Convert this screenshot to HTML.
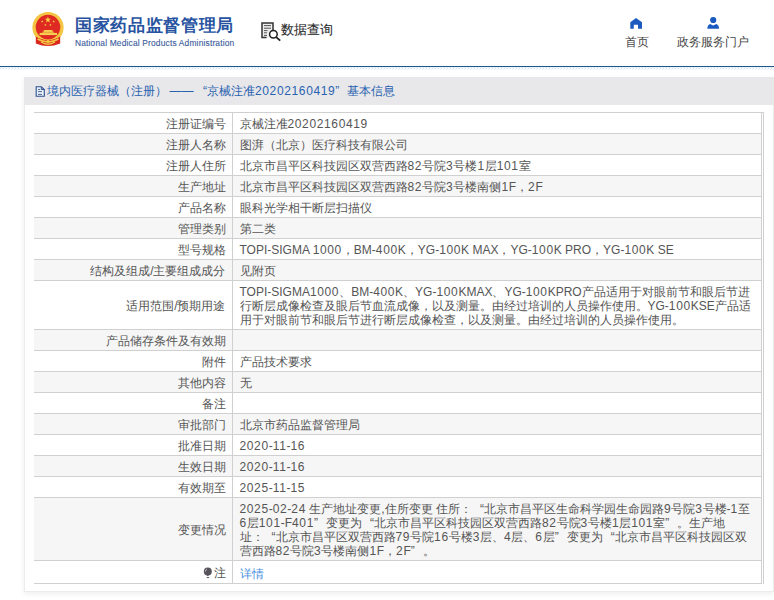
<!DOCTYPE html>
<html><head><meta charset="utf-8">
<style>
*{margin:0;padding:0;box-sizing:border-box}
html,body{width:774px;height:600px;overflow:hidden;background:#fff;font-family:"Liberation Sans",sans-serif;color:#555}
.abs{position:absolute}
.ql{display:inline-block;width:12px;text-align:right}
.qr{display:inline-block;width:12px;text-align:left}
.e{letter-spacing:0px}
.d{letter-spacing:.63px}
#title{left:75px;top:14.3px;font-size:17px;letter-spacing:.65px;font-weight:bold;color:#2753a0;white-space:nowrap}
#en{left:75px;top:38.2px;font-size:8.4px;letter-spacing:.18px;-webkit-text-stroke:.12px #3c5c9c;color:#3c5c9c;white-space:nowrap}
#sj{left:281px;top:21px;font-size:13px;color:#2a2a2a;-webkit-text-stroke:.1px #2a2a2a;white-space:nowrap}
.nav{font-size:12px;color:#444;white-space:nowrap}
#line{left:0;top:66px;width:774px;height:1px;background:#24558a}
#line2{left:0;top:67px;width:774px;height:1px;background:#e8f6fb}
#hatch{left:0;top:68px;width:774px;height:1px;background:repeating-linear-gradient(90deg,#cfdcf2 0 1.5px,#fff 1.5px 3px)}
#hatch2{left:-1px;top:69px;width:775px;height:1px;background:repeating-linear-gradient(90deg,#e6ecf6 0 1.5px,#fff 1.5px 3px)}
#panel{left:24px;top:77px;width:750px;height:515px;background:#fff;border:1px solid #ececec;border-top:0;box-shadow:0 2px 5px rgba(0,0,0,.07)}
#phead{left:-1px;top:0;width:751px;height:28px;background:#e8e8ea;color:#2862b0;font-size:12px;line-height:28px;padding-left:23px;white-space:nowrap}
#tbl{position:absolute;left:9px;top:35px;width:728px;border-collapse:collapse;table-layout:fixed;font-size:12px;color:#555}
td{border-top:1px solid #d0d0d0;border-bottom:1px solid #d0d0d0;height:21px;line-height:14px;padding:4px 8px 2px;vertical-align:middle;white-space:nowrap}
td.l{text-align:right;width:198px;border-right:1px solid #d0d0d0;padding-right:6px}
td.r{border-right:1px solid #d0d0d0;padding-left:7px}
tr:nth-child(even) td{background:#f6f6f6}
tr.last td{height:23px;line-height:16px}
#rline{left:738px;top:35px;width:1px;height:472px;background:#d0d0d0}
#tline{left:9px;top:35px;width:730px;height:1px;background:#d0d0d0}
</style></head><body>
<svg class="abs" style="left:32px;top:11px" width="32" height="36" viewBox="0 0 32 36">
<circle cx="16" cy="16.6" r="15.6" fill="#f4c542"/>
<circle cx="16" cy="16.1" r="12.3" fill="#de2a22"/>
<polygon points="15.90,5.60 16.69,7.71 18.94,7.81 17.18,9.22 17.78,11.39 15.90,10.14 14.02,11.39 14.62,9.22 12.86,7.81 15.11,7.71" fill="#f8d040"/><polygon points="10.20,9.10 10.52,9.96 11.44,10.00 10.72,10.57 10.96,11.45 10.20,10.95 9.44,11.45 9.68,10.57 8.96,10.00 9.88,9.96" fill="#f8d040"/><polygon points="21.70,9.10 22.02,9.96 22.94,10.00 22.22,10.57 22.46,11.45 21.70,10.95 20.94,11.45 21.18,10.57 20.46,10.00 21.38,9.96" fill="#f8d040"/><polygon points="13.40,12.60 13.72,13.46 14.64,13.50 13.92,14.07 14.16,14.95 13.40,14.45 12.64,14.95 12.88,14.07 12.16,13.50 13.08,13.46" fill="#f8d040"/><polygon points="18.40,12.60 18.72,13.46 19.64,13.50 18.92,14.07 19.16,14.95 18.40,14.45 17.64,14.95 17.88,14.07 17.16,13.50 18.08,13.46" fill="#f8d040"/>
<rect x="11.8" y="19" width="8.7" height="2" fill="#f6cf50"/>
<rect x="10.5" y="20.6" width="11.3" height="1.2" fill="#f3c04a"/>
<rect x="7.6" y="21.9" width="17.4" height="2.2" fill="#f6cf50"/>
<path d="M3.8 25.5 Q16 33 28.2 25.5 L28.2 32.5 Q16 37.5 3.8 32.5Z" fill="#d9261f"/>
<path d="M5.5 28 Q16 34 26.5 28" stroke="#f4c542" stroke-width="1.6" fill="none"/>
<path d="M9 31 Q16 35.5 23 31" stroke="#f4c542" stroke-width="1.3" fill="none"/>
<circle cx="16" cy="30.3" r="1.6" fill="#f4c542"/>
</svg>
<div id="title" class="abs">国家药品监督管理局</div>
<div id="en" class="abs">National Medical Products Administration</div>
<svg class="abs" style="left:260px;top:21px" width="22" height="21" viewBox="0 0 22 21">
<rect x="1.9" y="1.8" width="11.2" height="15" fill="#eeeeee"/>
<path d="M6.5 16.6H2V1.9H13V9.8" stroke="#333" stroke-width="1.5" fill="none"/>
<path d="M4 4.6h7M4 7.2h7M4 9.6h3.5M4 11.8h3M4 14.4h3" stroke="#555" stroke-width="1"/>
<circle cx="13.4" cy="13.3" r="3.8" stroke="#222" stroke-width="1.5" fill="#fff"/>
<path d="M16.2 16.1l4 3.6" stroke="#222" stroke-width="1.8"/>
</svg>
<div id="sj" class="abs">数据查询</div>
<svg class="abs" style="left:630px;top:17px" width="13" height="13" viewBox="0 0 13 13"><path d="M6 1L12 5.2V11.7H8V7.7H3.8V11.7H0.3V5.2z" fill="#1b5bbf"/></svg>
<div class="abs nav" style="left:625px;top:34px">首页</div>
<svg class="abs" style="left:707px;top:16px" width="13" height="13" viewBox="0 0 13 13"><circle cx="6.2" cy="4" r="3.1" fill="#1b5bbf"/><path d="M0.3 12.7Q0.6 9 3 8.1L6.2 9.6L9.4 8.1Q11.8 9 12.1 12.7z" fill="#1b5bbf"/></svg>
<div class="abs nav" style="left:677px;top:34px">政务服务门户</div>
<div id="line" class="abs"></div>
<div id="line2" class="abs"></div>
<div id="hatch" class="abs"></div>
<div id="hatch2" class="abs"></div>
<div id="panel" class="abs">
<div id="phead" class="abs">境内医疗器械（注册）<span style="margin-left:2.5px">——</span><span style="margin-left:1.5px"></span><span class="ql">“</span>京械注准<span class="d">20202160419</span><span class="qr">”</span>基本信息</div>
<svg class="abs" style="left:10px;top:9px" width="11" height="11" viewBox="0 0 11 11"><path d="M1.2 .7H6.3L9.3 3.6V10.2H1.2Z" stroke="#2f4f90" stroke-width="1.1" fill="#e6f2fa"/><path d="M6.3 .9V3.5H9.1" stroke="#2f4f90" stroke-width="1" fill="none"/><path d="M3 3.5H5M3 5.6H7M3 8.4H7" stroke="#52648f" stroke-width="1"/></svg>
<table id="tbl">
<tr><td class="l">注册证编号</td><td class="r">京械注准<span class="d">20202160419</span></td></tr>
<tr><td class="l">注册人名称</td><td class="r">图湃（北京）医疗科技有限公司</td></tr>
<tr><td class="l">注册人住所</td><td class="r">北京市昌平区科技园区双营西路<span class="d">82</span>号院<span class="d">3</span>号楼<span class="d">1</span>层<span class="d">101</span>室</td></tr>
<tr><td class="l">生产地址</td><td class="r">北京市昌平区科技园区双营西路<span class="d">82</span>号院<span class="d">3</span>号楼南侧<span class="d">1</span><span class="e">F</span>，<span class="d">2</span><span class="e">F</span></td></tr>
<tr><td class="l">产品名称</td><td class="r">眼科光学相干断层扫描仪</td></tr>
<tr><td class="l">管理类别</td><td class="r">第二类</td></tr>
<tr><td class="l">型号规格</td><td class="r"><span class="e">TOPI-SIGMA</span> <span class="d">1000</span>，<span class="e">BM-</span><span class="d">400</span><span class="e">K</span>，<span class="e">YG-</span><span class="d">100</span><span class="e">K</span> <span class="e">MAX</span>，<span class="e">YG-</span><span class="d">100</span><span class="e">K</span> <span class="e">PRO</span>，<span class="e">YG-</span><span class="d">100</span><span class="e">K</span> <span class="e">SE</span></td></tr>
<tr><td class="l">结构及组成/主要组成成分</td><td class="r">见附页</td></tr>
<tr><td class="l">适用范围/预期用途</td><td class="r"><span class="e">TOPI-SIGMA</span><span class="d">1000</span>、<span class="e">BM-</span><span class="d">400</span><span class="e">K</span>、<span class="e">YG-</span><span class="d">100</span><span class="e">KMAX</span>、<span class="e">YG-</span><span class="d">100</span><span class="e">KPRO</span>产品适用于对眼前节和眼后节进<br>行断层成像检查及眼后节血流成像，以及测量。由经过培训的人员操作使用。<span class="e">YG-</span><span class="d">100</span><span class="e">KSE</span>产品适<br>用于对眼前节和眼后节进行断层成像检查，以及测量。由经过培训的人员操作使用。</td></tr>
<tr><td class="l">产品储存条件及有效期</td><td class="r"></td></tr>
<tr><td class="l">附件</td><td class="r">产品技术要求</td></tr>
<tr><td class="l">其他内容</td><td class="r">无</td></tr>
<tr><td class="l">备注</td><td class="r"></td></tr>
<tr><td class="l">审批部门</td><td class="r">北京市药品监督管理局</td></tr>
<tr><td class="l">批准日期</td><td class="r"><span class="d">2020</span><span class="e">-</span><span class="d">11</span><span class="e">-</span><span class="d">16</span></td></tr>
<tr><td class="l">生效日期</td><td class="r"><span class="d">2020</span><span class="e">-</span><span class="d">11</span><span class="e">-</span><span class="d">16</span></td></tr>
<tr><td class="l">有效期至</td><td class="r"><span class="d">2025</span><span class="e">-</span><span class="d">11</span><span class="e">-</span><span class="d">15</span></td></tr>
<tr><td class="l">变更情况</td><td class="r"><span class="d">2025</span><span class="e">-</span><span class="d">02</span><span class="e">-</span><span class="d">24</span> 生产地址变更,住所变更 住所：<span class="ql">“</span>北京市昌平区生命科学园生命园路<span class="d">9</span>号院<span class="d">3</span>号楼<span class="e">-</span><span class="d">1</span>至<br><span class="d">6</span>层<span class="d">101</span><span class="e">-F</span><span class="d">401</span><span class="qr">”</span>变更为<span class="ql">“</span>北京市昌平区科技园区双营西路<span class="d">82</span>号院<span class="d">3</span>号楼<span class="d">1</span>层<span class="d">101</span>室<span class="qr">”</span>。生产地<br>址：<span class="ql">“</span>北京市昌平区双营西路<span class="d">79</span>号院<span class="d">16</span>号楼<span class="d">3</span>层、<span class="d">4</span>层、<span class="d">6</span>层<span class="qr">”</span>变更为<span class="ql">“</span>北京市昌平区科技园区双<br>营西路<span class="d">82</span>号院<span class="d">3</span>号楼南侧<span class="d">1</span><span class="e">F</span>，<span class="d">2</span><span class="e">F</span><span class="qr">”</span>。</td></tr>
<tr class="last"><td class="l"><svg width="10" height="12" viewBox="0 0 10 12" style="vertical-align:-2px;margin-right:1px"><circle cx="4.8" cy="4.4" r="4" fill="#57535b"/><path d="M3.2 7.5L4.8 9.2L6.4 7.5z" fill="#57535b"/><path d="M3.7 10.6h2.4" stroke="#57535b" stroke-width="1"/><path d="M2.4 4.6Q2.4 2.6 4 1.9" stroke="#c8c8c8" stroke-width=".9" fill="none"/></svg>注</td><td class="r" style="color:#4a8fe0"><span style="position:relative;top:1px">详情</span></td></tr>
</table>
<div id="rline" class="abs"></div>
<div id="tline" class="abs"></div>
</div>
</body></html>
